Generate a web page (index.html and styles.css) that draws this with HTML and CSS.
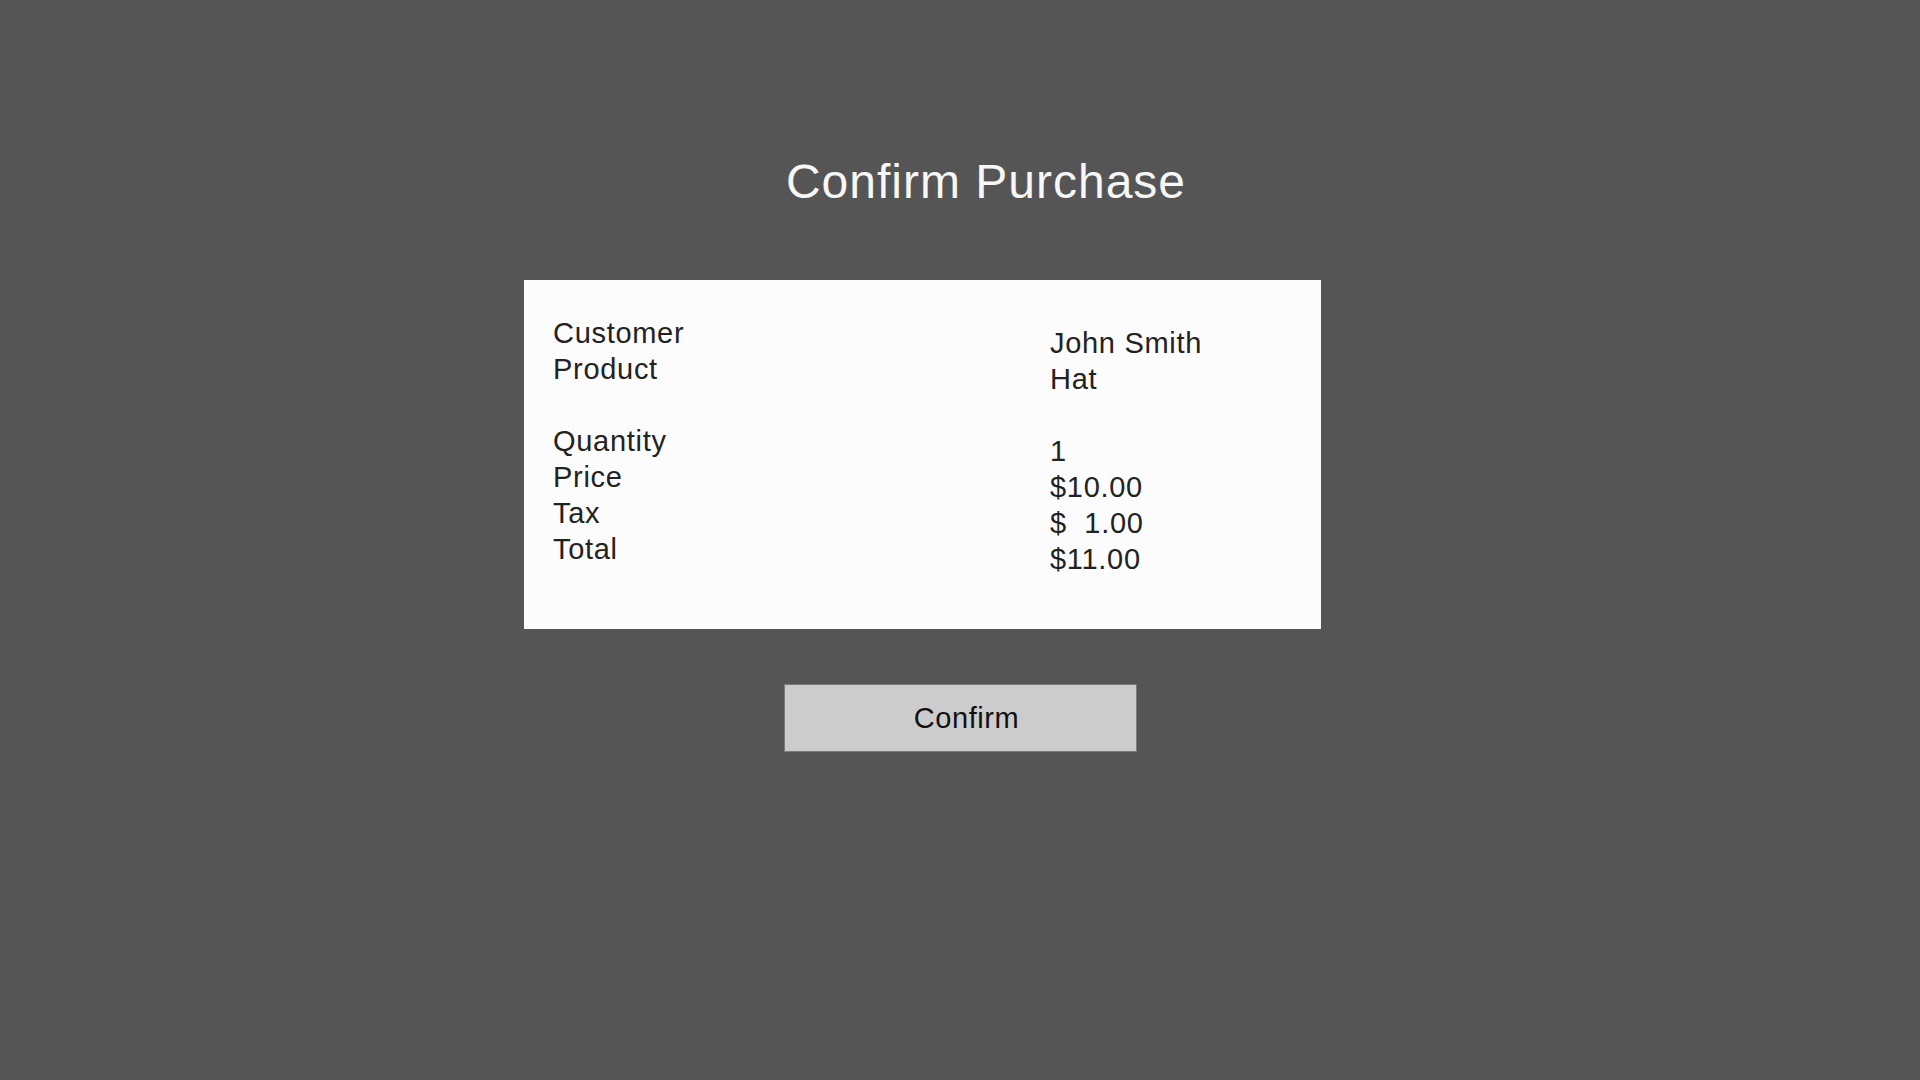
FILE: index.html
```html
<!DOCTYPE html>
<html lang="en">
<head>
<meta charset="utf-8">
<title>Confirm Purchase</title>
<link rel="stylesheet" href="styles.css">
</head>
<body>
<main class="page">
  <h1 class="title">Confirm Purchase</h1>
  <section class="card">
    <div class="col labels">
      <div class="group">
        <div class="line">Customer</div>
        <div class="line">Product</div>
      </div>
      <div class="group">
        <div class="line">Quantity</div>
        <div class="line">Price</div>
        <div class="line">Tax</div>
        <div class="line">Total</div>
      </div>
    </div>
    <div class="col values">
      <div class="group">
        <div class="line">John Smith</div>
        <div class="line">Hat</div>
      </div>
      <div class="group">
        <div class="line">1</div>
        <div class="line">$10.00</div>
        <div class="line">$&nbsp;&nbsp;1.00</div>
        <div class="line">$11.00</div>
      </div>
    </div>
  </section>
  <button class="confirm" type="button">Confirm</button>
</main>
</body>
</html>
```

FILE: styles.css
```css
html, body {
  margin: 0;
  padding: 0;
  background: #555555;
}

.page {
  width: 1920px;
  height: 1080px;
  display: flex;
  flex-direction: column;
  align-items: flex-start;
  font-family: "Liberation Sans", Arial, sans-serif;
}

.title {
  margin: 0;
  padding-top: 154px;
  width: 1920px;
  box-sizing: border-box;
  padding-left: 52px;
  text-align: center;
  font-size: 48px;
  line-height: 56px;
  font-weight: normal;
  letter-spacing: 1px;
  color: #f7f7f7;
}

.card {
  margin-top: 70px;
  margin-left: 524px;
  width: 797px;
  height: 349px;
  box-sizing: border-box;
  background: #fcfcfc;
  padding: 35px 0 0 29px;
  display: flex;
  color: #222222;
  font-size: 29px;
  line-height: 36px;
  letter-spacing: 0.7px;
}

.labels {
  width: 497px;
}

.values {
  margin-top: 10px;
}

.group + .group {
  margin-top: 36px;
}

.line {
  white-space: pre;
}

.confirm {
  margin-top: 55px;
  margin-left: 784px;
  width: 353px;
  height: 68px;
  box-sizing: border-box;
  border: 1px solid #7a7a7a;
  background: #cccccc;
  padding: 0 0 0 12px;
  font-family: "Liberation Sans", Arial, sans-serif;
  font-size: 29px;
  letter-spacing: 0.6px;
  color: #111111;
  cursor: pointer;
}
```
